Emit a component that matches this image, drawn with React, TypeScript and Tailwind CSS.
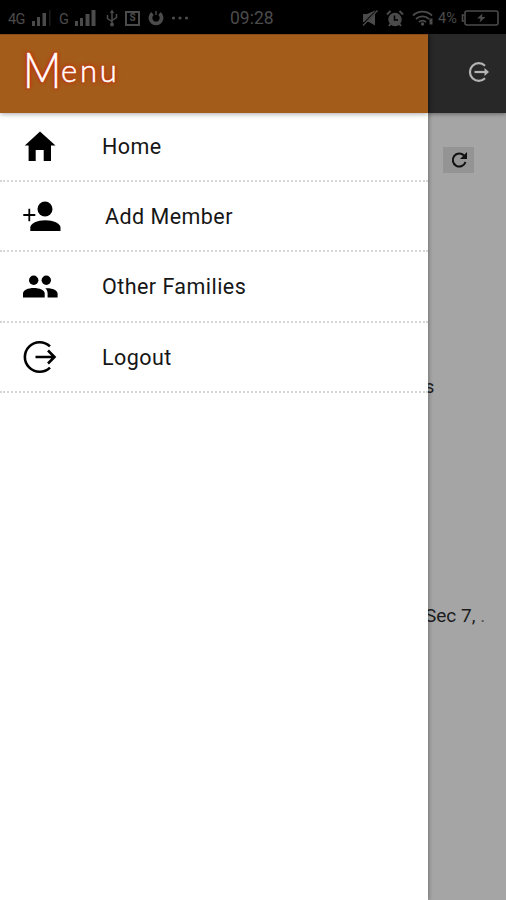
import type { ReactNode } from 'react'

const menuItems: { name: string; row: string; label: string; icon: ReactNode }[] = [
  {
    name: 'Home',
    row: 'h-[69px]',
    label: 'ml-[38px] pt-px',
    icon: <path d="M20 4.5 35.5 18.5H31V34h-7.3V23h-8v11H8.6V18.5H4.8z" fill="currentColor" />,
  },
  {
    name: 'Add Member',
    row: 'h-[70px]',
    label: 'ml-[41px] pt-0.5',
    icon: (
      <>
        <circle cx="25" cy="13" r="7.5" fill="currentColor" />
        <path d="M10.3 35v-3.5c0-4 7-7.2 15-7.2s15.2 3.2 15.2 7.2V35z" fill="currentColor" />
        <path d="M3.3 19h12M9.3 12.8v12.5" stroke="currentColor" strokeWidth="1.8" fill="none" />
      </>
    ),
  },
  {
    name: 'Other Families',
    row: 'h-[71px]',
    label: 'ml-[38px] pt-0.5',
    icon: (
      <>
        <circle cx="13.7" cy="13.2" r="4.7" fill="currentColor" />
        <circle cx="26.3" cy="13.2" r="4.7" fill="currentColor" />
        <path d="M3 30.5v-4c0-3.4 5-5.5 10.8-5.5s10.9 2.1 10.9 5.5v4z" fill="currentColor" />
        <path d="M27.6 30.5v-4c0-2.2-.8-4-2.3-5.2 6.7-.5 12.3 1.8 12.3 5.2v4z" fill="currentColor" />
      </>
    ),
  },
  {
    name: 'Logout',
    row: 'h-[70px]',
    label: 'ml-[38px] pt-0.5',
    icon: (
      <g stroke="currentColor" strokeWidth="2.6" fill="none">
        <path d="M30 9.4a14.8 14.8 0 1 0 0 21.2" />
        <path d="M15.5 20H34M28 13.5l6.5 6.5-6.5 6.5" />
      </g>
    ),
  },
]

function StatusBar() {
  return (
    <div className="flex h-[34px] items-center bg-black pl-2 pr-1.5 pt-0.5 text-[14.5px] text-[#4b4b4b]">
      <span className="w-[20px] pt-1 tracking-tighter">4G</span>
      <span className="flex w-[31px] pb-px pl-[3px]">
        <svg className="h-[18px] w-5" viewBox="0 0 20 18" fill="currentColor">
          <rect x="1" y="12" width="3" height="5" />
          <rect x="6" y="8" width="3" height="9" />
          <rect x="11.5" y="4" width="3.5" height="13" />
          <rect x="18" y="1" width="1.5" height="16" opacity="0.35" />
        </svg>
      </span>
      <span className="w-[14px] pt-1">G</span>
      <span className="flex w-[31px] pb-px">
        <svg className="h-[18px] w-6" viewBox="0 0 24 18" fill="currentColor">
          <rect x="2" y="12" width="3" height="5" />
          <rect x="7" y="9" width="3" height="8" />
          <rect x="12.5" y="5" width="4" height="12" />
          <rect x="18.5" y="1" width="4" height="16" />
        </svg>
      </span>
      {/* USB */}
      <svg className="ml-0.5 h-[18px] w-3" viewBox="0 0 12 18" fill="none" stroke="currentColor" strokeWidth="1.5">
        <path d="M6 2v13M1.5 6v3.5l4.500 3M10.500 5v3.500l-4.500 3" />
        <path d="M3.8 4 6 .5 8.2 4z" fill="currentColor" stroke="none" />
        <circle cx="6" cy="15.5" r="2" fill="currentColor" stroke="none" />
      </svg>
      <span className="ml-[7px] flex h-[15px] w-[15px] items-center justify-center border-2 border-[#4b4b4b] text-[10px] font-bold leading-none">S</span>
      <svg className="ml-2 h-4 w-4" viewBox="0 0 16 16" fill="none" stroke="currentColor">
        <path d="M4.5 3.500a5.600 5.600 0 1 0 7 0" strokeWidth="3.800" />
        <path d="M8 1v4" strokeWidth="1.4" />
      </svg>
      <svg className="ml-[7px] h-4 w-[18px]" viewBox="0 0 18 16" fill="currentColor">
        <circle cx="2.5" cy="8" r="1.6" />
        <circle cx="9" cy="8" r="1.6" />
        <circle cx="15.5" cy="8" r="1.6" />
      </svg>
      <span className="ml-[41px] w-[46px] pt-px text-[17.5px]">09:28</span>
      <div className="ml-auto flex items-center">
        {/* Muted */}
        <svg className="h-4 w-4" viewBox="0 0 16 16" fill="currentColor">
          <path d="M1 4h4l8-3.5v15L7 12H1z" />
          <path d="M0 15.5 14 1.5" stroke="#000" strokeWidth="2" />
          <path d="M1 15.5 15.5.5" stroke="currentColor" strokeWidth="1.4" />
        </svg>
        {/* Alarm */}
        <svg className="ml-2 h-[17px] w-[18px]" viewBox="0 0 18 17">
          <circle cx="9" cy="9.5" r="6.7" fill="currentColor" />
          <path d="M1 4.5 4.5 1M13.5 1 17 4.5M4.5 14 3 16M13.5 14l1.5 2" stroke="currentColor" strokeWidth="2" />
          <path d="M8.5 5.5v4.5H12" stroke="#000" strokeWidth="1.5" fill="none" />
        </svg>
        {/* Wifi */}
        <svg className="ml-2 h-4 w-[22px]" viewBox="0 0 22 16" fill="none" stroke="currentColor" strokeWidth="1.8">
          <path d="M1 5.5a13.5 13.5 0 0 1 19 0M4 9a9.5 9.5 0 0 1 13 0M7 12a5.5 5.5 0 0 1 7 0" />
          <circle cx="10.5" cy="14" r="1.7" fill="currentColor" stroke="none" />
          <path d="M19 8.5v6" strokeWidth="3" />
        </svg>
        <span className="ml-1 w-[23px] pt-0.5">4%</span>
        <svg className="h-4 w-[39px]" viewBox="0 0 39 16" fill="none" stroke="currentColor" strokeWidth="1.6">
          <rect x="4" y="1" width="33" height="14" rx="2" />
          <path d="M3.5 5H1.5v6h2" />
          <path d="m21.5 3.5-5.5 5h3.5L18.5 12.5l6-5.5H21z" fill="currentColor" stroke="none" />
        </svg>
      </div>
    </div>
  )
}

function Drawer() {
  return (
    <aside className="z-10 w-[428px] shrink-0 bg-white shadow-[1px_0_4px_rgba(0,0,0,0.3)]">
      <header className="flex h-[79px] items-center border-t border-[#8a4b1c] bg-[#a45c1a] pl-[23px] shadow-[0_1px_5px_rgba(0,0,0,0.35)]">
        <h1 className="flex pb-3 font-['Lato','Liberation_Sans',sans-serif] text-[31px] font-light leading-none text-white [text-shadow:0_0_3px_#e01800,0_0_5px_#d01800] [-webkit-text-stroke:0.5px_white]">
          <span className="inline-block w-[38px] origin-left scale-x-[0.86] pt-0.5 text-[49px]">M</span>
          <span className="self-end pb-2 tracking-[2.8px]">enu</span>
        </h1>
      </header>
      <nav>
        {menuItems.map((item) => (
          <a
            key={item.name}
            className={`flex items-center border-b-2 border-dotted border-[#d6d6d6] pl-5 text-[21.5px] tracking-[0.45px] text-[#161616] ${item.row}`}
          >
            <svg className="h-10 w-11 text-black" viewBox="0 0 44 40">
              {item.icon}
            </svg>
            <span className={item.label}>{item.name}</span>
          </a>
        ))}
      </nav>
    </aside>
  )
}

// Slice of the page that stays visible beside the open drawer
function DimmedPage() {
  return (
    <main className="flex w-[78px] flex-col bg-[#a5a5a5] text-[18px] text-[#1c1c1c]">
      <header className="flex h-[79px] items-center justify-end bg-[#282828] pr-4 shadow-[0_1px_4px_rgba(0,0,0,0.4)]">
        <svg className="mb-1 h-[22px] w-[22px] text-[#b4b4b4]" viewBox="0 0 22 22" fill="none" stroke="currentColor" strokeWidth="2.2">
          <path d="M17 4.8a8.8 8.8 0 1 0 0 12.4" />
          <path d="M6.5 11h12" />
          <path d="M16.5 7l4.500 4-4.500 4z" fill="currentColor" stroke="none" />
        </svg>
      </header>
      <button className="ml-[15px] mt-[34px] flex h-[26px] w-[31px] items-center justify-center bg-[#949494]">
        <svg className="h-[18px] w-[18px]" viewBox="0 0 18 18" fill="none" stroke="#111" strokeWidth="2">
          <path d="M14 4.500A6.500 6.500 0 1 0 15.500 11" />
          <path d="M17 1v7h-7z" fill="#111" stroke="none" />
        </svg>
      </button>
      <p className="-ml-[3px] mt-[202px] h-6 leading-6">s</p>
      <p className="-ml-[3px] mt-[205px] h-6 w-[59px] overflow-hidden whitespace-nowrap text-[19px] leading-6">
        Sec 7, <span className="text-[#555]">.</span>
      </p>
    </main>
  )
}

export default function App() {
  return (
    <div className="flex h-[900px] w-[506px] flex-col overflow-hidden bg-white font-['Roboto','Liberation_Sans',sans-serif]">
      <StatusBar />
      <div className="flex flex-1">
        <Drawer />
        <DimmedPage />
      </div>
    </div>
  )
}
